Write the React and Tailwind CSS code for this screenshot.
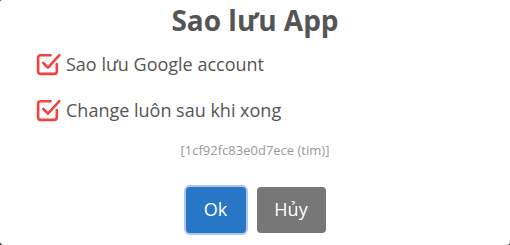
import React from "react";

const CheckIcon = () => (
  <svg width="27" height="27" viewBox="0 0 26 26" fill="none" className="shrink-0">
    <path
      d="M21 13.5V20.5C21 22 20 23 18.5 23H5.5C4 23 3 22 3 20.5V7.5C3 6 4 5 5.5 5H15"
      stroke="#f0443c"
      strokeWidth="2.5"
      strokeLinecap="round"
      strokeLinejoin="round"
    />
    <path
      d="M8 12.5L12.5 17L23.5 5"
      stroke="#f0443c"
      strokeWidth="2.5"
      strokeLinecap="round"
      strokeLinejoin="round"
    />
  </svg>
);

const Option = ({ label }) => (
  <div className="flex items-center gap-[4px]">
    <CheckIcon />
    <span className="text-[18px] leading-6 text-[#555]">{label}</span>
  </div>
);

export default function App() {
  return (
    <div className="h-screen w-screen bg-[#2a2a2a]" style={{ fontFamily: '"Open Sans", sans-serif' }}>
      <div className="flex h-full w-full flex-col rounded-tl-[2px] rounded-bl-[4px] rounded-br-[3px] bg-white">
        <h1 className="pt-[2px] text-center text-[28px] font-bold leading-[36px] text-[#555]">
          Sao lưu App
        </h1>
        <div className="mt-[12px] flex flex-col gap-[19px] pl-[35px]">
          <Option label="Sao lưu Google account" />
          <Option label="Change luôn sau khi xong" />
        </div>
        <div className="mt-[18px] text-center text-[13px] text-[#999]">
          [1cf92fc83e0d7ece (tim)]
        </div>
        <div className="mt-[26px] flex justify-center gap-[11px] pl-[1px]">
          <button className="h-[46px] w-[60px] rounded-[4px] bg-[#2877c7] text-[18px] text-white ring-2 ring-[#a9c8ea]">
            Ok
          </button>
          <button className="h-[46px] w-[69px] rounded-[4px] bg-[#777] text-[18px] text-white">
            Hủy
          </button>
        </div>
      </div>
    </div>
  );
}
